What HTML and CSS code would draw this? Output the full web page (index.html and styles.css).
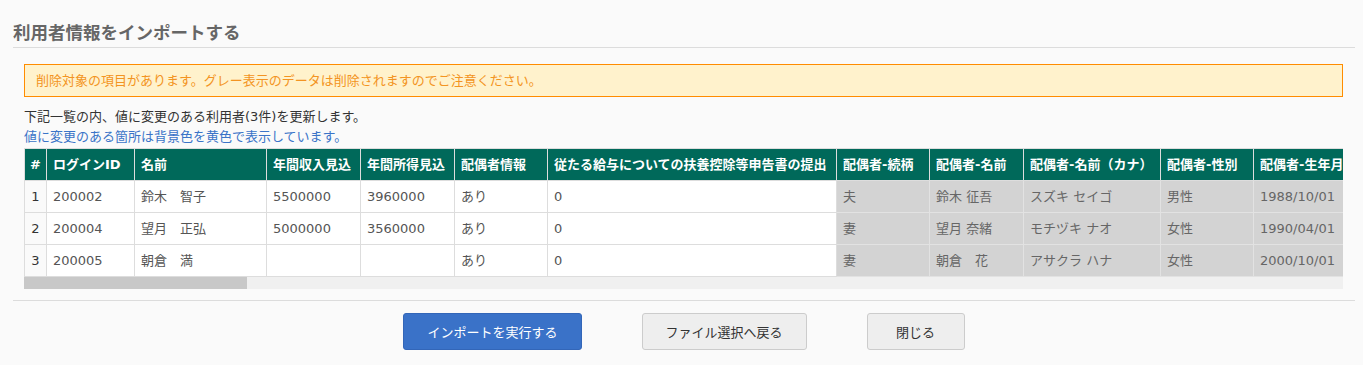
FILE: index.html
```html
<!DOCTYPE html>
<html lang="ja">
<head>
    <meta charset="UTF-8">
    <title>利用者情報をインポートする</title>
    <link rel="stylesheet" href="styles.css">
</head>
<body>
<div class="wrap">
    <h1 class="page-title">利用者情報をインポートする</h1>

    <div class="panel">
        <div class="alert">削除対象の項目があります。グレー表示のデータは削除されますのでご注意ください。</div>

        <div class="lead">
            <p>下記一覧の内、値に変更のある利用者(3件)を更新します。</p>
            <p class="note">値に変更のある箇所は背景色を黄色で表示しています。</p>
        </div>

        <div class="scroll">
            <table class="grid">
                <thead>
                <tr>
                    <th class="c-no">#</th>
                    <th class="c-id">ログインID</th>
                    <th class="c-name">名前</th>
                    <th class="c-num">年間収入見込</th>
                    <th class="c-num">年間所得見込</th>
                    <th class="c-s">配偶者情報</th>
                    <th class="c-long">従たる給与についての扶養控除等申告書の提出</th>
                    <th class="c-s">配偶者-続柄</th>
                    <th class="c-sn">配偶者-名前</th>
                    <th class="c-kana">配偶者-名前（カナ）</th>
                    <th class="c-s">配偶者-性別</th>
                    <th class="c-date">配偶者-生年月日</th>
                </tr>
                </thead>
                <tbody>
                <tr>
                    <td class="no">1</td><td>200002</td><td>鈴木　智子</td><td>5500000</td><td>3960000</td><td>あり</td><td>0</td>
                    <td class="del">夫</td><td class="del">鈴木 征吾</td><td class="del">スズキ セイゴ</td><td class="del">男性</td><td class="del">1988/10/01</td>
                </tr>
                <tr>
                    <td class="no">2</td><td>200004</td><td>望月　正弘</td><td>5000000</td><td>3560000</td><td>あり</td><td>0</td>
                    <td class="del">妻</td><td class="del">望月 奈緒</td><td class="del">モチヅキ ナオ</td><td class="del">女性</td><td class="del">1990/04/01</td>
                </tr>
                <tr>
                    <td class="no">3</td><td>200005</td><td>朝倉　満</td><td></td><td></td><td>あり</td><td>0</td>
                    <td class="del">妻</td><td class="del">朝倉　花</td><td class="del">アサクラ ハナ</td><td class="del">女性</td><td class="del">2000/10/01</td>
                </tr>
                </tbody>
            </table>
        </div>
        <div class="hbar"><div class="hbar-thumb"></div></div>
    </div>

    <div class="actions">
        <button class="btn btn-primary" type="button">インポートを実行する</button>
        <button class="btn" type="button">ファイル選択へ戻る</button>
        <button class="btn btn-close" type="button">閉じる</button>
    </div>
</div>
</body>
</html>
```

FILE: styles.css
```css
* { margin: 0; padding: 0; box-sizing: border-box; }
body { background: #fafafa; font-family: "DejaVu Sans", "Noto Sans CJK JP", sans-serif; font-size: 13px; color: #333; }

.wrap { margin: 0 8px 0 13px; }
.page-title { padding: 20px 0 3px; font-size: 17.5px; line-height: 24px; font-weight: bold; color: #666; border-bottom: 1px solid #dcdcdc; font-family: "Noto Sans CJK JP", sans-serif; }

.panel { padding: 0 12px 0 11px; }
.alert { margin-top: 16px; padding: 6px 11px; line-height: 19px; background: #fff2cc; border: 1px solid #ff8c00; color: #f39422; }

.lead { margin-top: 10px; margin-bottom: 1px; }
.lead p { line-height: 20px; color: #333; }
.lead .note { color: #3a74c8; }

/* 横スクロール（表示だけのバー） */
.scroll { overflow: hidden; }
.hbar { height: 12px; background: #f0f0f0; }
.hbar-thumb { width: 223px; height: 100%; background: #c8c8c8; }

.grid { width: 1340px; table-layout: fixed; border-collapse: collapse; }
.grid th, .grid td { padding: 6px 6px; line-height: 19px; text-align: left; white-space: nowrap; overflow: hidden; border: 1px solid #dddddd; }
.grid th { background: #00695a; color: #fff; font-weight: bold; }
.grid td { background: #fff; color: #555; }
.grid th.c-no, .grid td.no { text-align: center; padding: 6px 0; }
.grid td.no { background: #fafafa; color: #333; }
.grid td.del { background: #d3d3d3; color: #666; border-color: #e2e2e2; }

.c-no { width: 22px; }
.c-id { width: 88px; }
.c-name { width: 132px; }
.c-num { width: 94px; }
.c-s { width: 93px; }
.c-long { width: 289px; }
.c-sn { width: 94px; }
.c-kana { width: 137px; }
.c-date { width: 111px; }

.actions { display: flex; justify-content: center; gap: 60px; margin-top: 11px; padding-top: 12px; border-top: 1px solid #dcdcdc; }
.btn { height: 37px; padding: 0 23px; font-family: "Noto Sans CJK JP", sans-serif; font-size: 13px; color: #333; background: #eeeeee; border: 1px solid #cccccc; border-radius: 3px; cursor: pointer; }
.btn-primary { background: #3a72c8; border-color: #3366b8; color: #fff; }
.btn-close { min-width: 98px; }
```
